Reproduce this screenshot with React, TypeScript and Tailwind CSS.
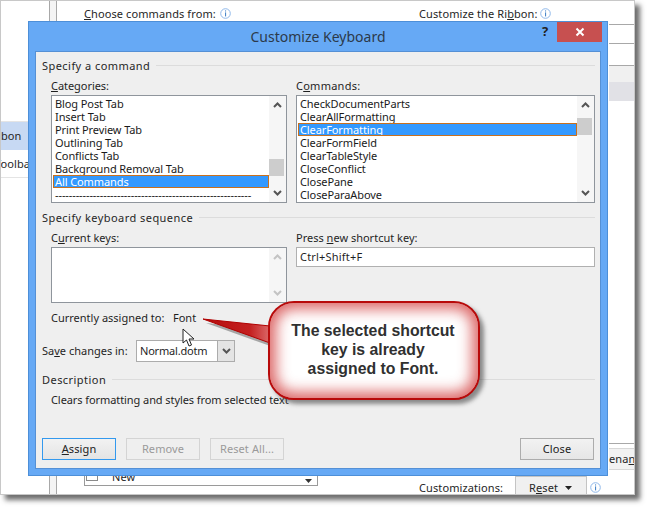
const F = "font-['Noto_Sans','Open_Sans',sans-serif]";

function Group({ title, w = "" }: { title: string; w?: string }) {
  return (
    <div className={`flex items-center gap-[6px] h-[16px] ${w}`}>
      <span className="text-[#262626] whitespace-nowrap tracking-[0.45px]">{title}</span>
      <div className="flex-1 h-px bg-[#dcdcdc] -mt-[2px]" />
    </div>
  );
}

function Chevron({ up, color = "#555555" }: { up?: boolean; color?: string }) {
  return (
    <svg width="9" height="6" viewBox="0 0 9 6">
      <path d={up ? "M1 5L4.5 1.5L8 5" : "M1 1L4.5 4.5L8 1"} fill="none" stroke={color} strokeWidth="2" />
    </svg>
  );
}

function ListBox({ items, selected, thumbTop, thumbH, w }: { items: string[]; selected: number; thumbTop: string; thumbH: string; w: string }) {
  return (
    <div className={`${w} h-[108px] border border-[#8f959c] bg-white flex`}>
      <div className="flex-1 min-w-0 pt-[1px] pl-[1px] flex flex-col overflow-hidden">
        {items.map((t, i) => (
          <div
            key={t}
            className={`h-[13px] shrink-0 leading-[14px] pl-[2px] whitespace-nowrap tracking-[-0.1px] ${
              i === selected ? "bg-[#3399ff] text-white outline outline-1 -outline-offset-1 outline-[#c9701d]" : "text-[#1a1a1a]"
            }`}
          >
            {t}
          </div>
        ))}
      </div>
      <div className="w-[17px] shrink-0 bg-[#f6f6f6] flex flex-col items-center justify-between py-[6px] relative">
        <Chevron up />
        <div className={`absolute left-0 w-[15px] bg-[#cdcdcd] ${thumbTop} ${thumbH}`} />
        <Chevron />
      </div>
    </div>
  );
}

function Btn({ children, primary, disabled, w = "w-[74px]" }: { children: React.ReactNode; primary?: boolean; disabled?: boolean; w?: string }) {
  return (
    <div
      className={`${w} h-[22px] flex items-center justify-center border tracking-[0.1px] ${
        primary
          ? "border-[#3399ee] bg-gradient-to-b from-[#f2f2f2] to-[#e4e4e4] text-[#222]"
          : disabled
          ? "border-[#d4d4d4] bg-[#efefef] text-[#9a9a9a]"
          : "border-[#acacac] bg-gradient-to-b from-[#f2f2f2] to-[#e6e6e6] text-[#222]"
      }`}
    >
      {children}
    </div>
  );
}

function Info({ className }: { className: string }) {
  return (
    <svg className={className} width="11" height="11" viewBox="0 0 11 11">
      <circle cx="5.5" cy="5.5" r="4.8" fill="#fff" stroke="#8fb8ea" />
      <rect x="5" y="2.4" width="1.1" height="1.1" fill="#4a86c8" />
      <rect x="5" y="4.4" width="1.1" height="4" fill="#4a86c8" />
    </svg>
  );
}

function Background() {
  return (
    <div className="absolute left-0 top-0 w-[635px] h-[495px] bg-white border border-[#c8c8c8] shadow-[5px_5px_5px_rgba(60,60,60,0.75)] overflow-hidden text-[#262626] text-[11px] tracking-[0.1px]">
      <div className="absolute left-[48px] top-0 bottom-0 w-[8px] border-x border-[#a8a8a8] bg-[#f4f4f4]" />
      <div className="absolute left-[83px] top-[5px] whitespace-nowrap"><u>C</u>hoose commands from:</div>
      <Info className="absolute left-[219px] top-[7px]" />
      <div className="absolute left-[418px] top-[5px] whitespace-nowrap">Customize the Ri<u>b</u>bon:</div>
      <Info className="absolute left-[539px] top-[7px]" />
      <div className="absolute left-0 top-[120px] w-[28px] h-[57px] border-y border-[#e4e4e4]">
        <div className="h-[28px] bg-[#c7d9f3] leading-[28px] overflow-hidden">
          <div className="w-[18px] text-right">bon</div>
        </div>
        <div className="h-[27px] leading-[27px] overflow-hidden whitespace-nowrap -ml-[6px]">Toolbar</div>
      </div>
      <div className="absolute left-[608px] top-[23px] w-[26px] h-px bg-[#a8a8a8]" />
      <div className="absolute left-[608px] top-[42px] w-[26px] h-px bg-[#a8a8a8]" />
      <div className="absolute left-[608px] top-[64px] w-[26px] h-[36px] bg-[#f0f0f0] border-t border-[#a8a8a8]">
        <div className="mt-[16px] h-[19px] bg-[#e1e1e6]" />
      </div>
      <div className="absolute left-[608px] top-[442px] w-[26px] h-[32px] border-t border-[#a8a8a8]">
        <div className="mt-[4px] h-[22px] border-y border-[#d8d8d8] bg-[#f2f2f2] leading-[20px] whitespace-nowrap overflow-hidden">ena<u>n</u></div>
      </div>
      <div className="absolute left-[83px] top-[460px] w-[234px] h-[25px] border-x border-b border-[#9a9a9a]">
        <div className="absolute left-[1px] top-[8px] w-[12px] h-[12px] border border-[#8a8a8a] bg-white" />
        <div className="absolute left-[27px] top-[8px] leading-[16px]">New</div>
        <svg className="absolute right-[5px] top-[18px]" width="7" height="4" viewBox="0 0 7 4"><path d="M0 0H7L3.5 4Z" fill="#333" /></svg>
      </div>
      <div className="absolute left-[418px] top-[479px] whitespace-nowrap">Customizations:</div>
      <div className="absolute left-[514px] top-[475px] w-[72px] h-[24px] border border-[#c4c4c4] bg-[#f0f0f0] pl-[13px] pt-[3px] whitespace-nowrap flex items-start gap-[7px]">
        <span>R<u>e</u>set</span>
        <svg className="mt-[6px]" width="7" height="4" viewBox="0 0 7 4"><path d="M0 0H7L3.5 4Z" fill="#222" /></svg>
      </div>
      <Info className="absolute left-[589px] top-[481px]" />
    </div>
  );
}

function Callout() {
  return (
    <div className="absolute left-[200px] top-[298px] w-[290px] h-[112px]">
      <svg className="absolute left-0 top-0" width="90" height="60" viewBox="0 0 90 60">
        <defs>
          <linearGradient id="tail" x1="0" x2="1" y1="0" y2="0">
            <stop offset="0" stopColor="#b50d0d" />
            <stop offset="0.7" stopColor="#c42020" />
            <stop offset="1" stopColor="#dc6a6a" />
          </linearGradient>
        </defs>
        <path d="M3 21L70 28L70 45Z" fill="#6a6a6a" opacity="0.55" transform="translate(3 4)" />
        <path d="M3 21L70 28L70 45Z" fill="url(#tail)" stroke="#b00000" />
      </svg>
      <div className="absolute left-[68px] top-[3px] w-[212px] h-[99px] rounded-[26px] border-[2px] border-[#b80a0a] bg-white shadow-[inset_0_0_14px_6px_rgba(205,40,40,0.7),4px_4px_4px_rgba(70,70,70,0.6)] flex items-center justify-center text-center tracking-normal">
        <div className="font-['Liberation_Sans',sans-serif] font-bold text-[15.8px] leading-[19px] text-[#303030] -mt-[2px] -ml-[2px]">
          The selected shortcut
          <br />
          key is already
          <br />
          assigned to Font.
        </div>
      </div>
    </div>
  );
}

export default function App() {
  return (
    <div className={`relative w-[650px] h-[510px] bg-white overflow-hidden text-[11px] leading-[16px] ${F}`}>
      <Background />
      <div className="absolute left-[28px] top-[21px] w-[580px] h-[455px] border border-[#4d8fd8] bg-[#66a9f5] flex flex-col">
        <div className="h-[29px] shrink-0 relative flex items-center justify-center text-[14px] text-[#2c3a4a]">
          <span>Customize Keyboard</span>
          <span className="absolute left-[513px] top-[1px] font-bold text-[13px] text-[#222]">?</span>
          <div className="absolute right-[5px] top-0 w-[45px] h-[20px] bg-[#c75050] flex items-center justify-center">
            <svg width="10" height="10" viewBox="0 0 10 10"><path d="M1.5 1.5L8.5 8.5M8.5 1.5L1.5 8.5" stroke="#fff" strokeWidth="2" /></svg>
          </div>
        </div>
        <div className="mx-[6px] mb-[6px] flex-1 bg-[#efefef] border border-[#5590d5] pt-[6px] pl-[6px] pr-[5px] flex flex-col text-[#1f1f1f] relative">
          <Group title="Specify a command" />
          <div className="pl-[9px] mt-[4px]">
            <div className="flex gap-[9px] h-[17px]">
              <div className="w-[236px] tracking-[-0.05px]"><u>C</u>ategories:</div>
              <div className="tracking-[0.25px]">C<u>o</u>mmands:</div>
            </div>
            <div className="flex gap-[9px]">
              <ListBox w="w-[236px]" selected={6} thumbTop="top-[63px]" thumbH="h-[17px]" items={["Blog Post Tab", "Insert Tab", "Print Preview Tab", "Outlining Tab", "Conflicts Tab", "Background Removal Tab", "All Commands", "---------------------------------------------------------"]} />
              <ListBox w="w-[299px]" selected={2} thumbTop="top-[22px]" thumbH="h-[17px]" items={["CheckDocumentParts", "ClearAllFormatting", "ClearFormatting", "ClearFormField", "ClearTableStyle", "CloseConflict", "ClosePane", "CloseParaAbove"]} />
            </div>
          </div>
          <div className="mt-[7px]"><Group title="Specify keyboard sequence" /></div>
          <div className="pl-[9px] mt-[4px]">
            <div className="flex gap-[9px] h-[17px]">
              <div className="w-[236px]">C<u>u</u>rrent keys:</div>
              <div>Press <u>n</u>ew shortcut key:</div>
            </div>
            <div className="flex gap-[9px] items-start">
              <div className="w-[236px] h-[56px] border border-[#8f959c] bg-white flex justify-end">
                <div className="w-[17px] bg-[#f6f6f6] flex flex-col items-center justify-between py-[6px]">
                  <Chevron up color="#c4c4c4" />
                  <Chevron color="#c4c4c4" />
                </div>
              </div>
              <div className="w-[299px] h-[20px] border border-[#b0b0b0] bg-white pl-[3px] leading-[18px] tracking-[0.2px]">Ctrl+Shift+F</div>
            </div>
            <div className="flex mt-[7px] h-[16px] whitespace-nowrap">
              <span className="w-[122px]">Currently assigned to:</span>
              <span>Font</span>
            </div>
          </div>
          <div className="flex items-center mt-[14px] h-[22px]">
            <span className="w-[94px] whitespace-nowrap">Sa<u>v</u>e changes in:</span>
            <div className="w-[99px] h-[22px] border-[1.5px] border-[#acacac] bg-white flex items-center">
              <span className="flex-1 pl-[3px] whitespace-nowrap tracking-[-0.2px]">Normal.dotm</span>
              <div className="w-[17px] h-full bg-[#e4e4e4] border-l border-[#acacac] flex items-center justify-center"><Chevron /></div>
            </div>
          </div>
          <div className="mt-[10px]"><Group title="Description" /></div>
          <div className="pl-[9px] mt-[4px] h-[16px] whitespace-nowrap tracking-[-0.08px]">Clears formatting and styles from selected text</div>
          <div className="flex mt-[30px] justify-between pr-[1px]">
            <div className="flex gap-[10px]">
              <Btn primary><span><u>A</u>ssign</span></Btn>
              <Btn disabled>Remove</Btn>
              <Btn disabled>Reset All...</Btn>
            </div>
            <Btn>Close</Btn>
          </div>
        </div>
      </div>
      <Callout />
      <svg className="absolute left-[182px] top-[328px]" width="14" height="20" viewBox="0 0 14 20">
        <path d="M1 1L1 15L4.5 12L7 18L9.5 17L7 11L12 11Z" fill="#fff" stroke="#222" strokeWidth="1" />
      </svg>
    </div>
  );
}
